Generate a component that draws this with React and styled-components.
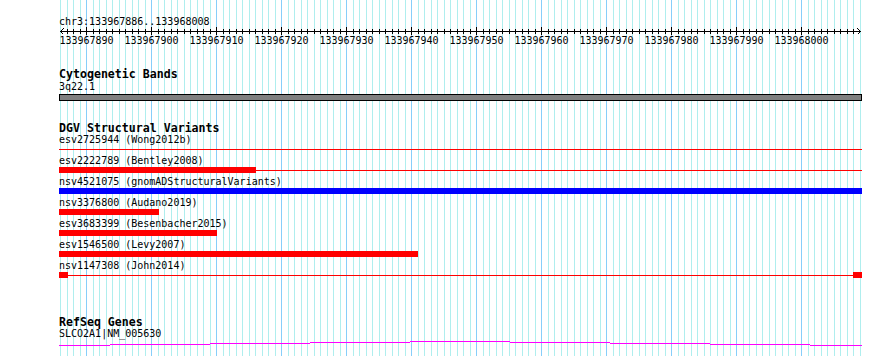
import React from 'react';
import styled, { createGlobalStyle } from 'styled-components';

const GlobalStyle = createGlobalStyle`
  html, body { margin: 0; padding: 0; background: #ffffff; }
  body { font-family: "DejaVu Sans Mono", "Liberation Mono", monospace; }
`;

const PX_PER_BP = 6.5;
const ORIGIN = 60;
const FEATURE_LEFT = 59;
const FEATURE_WIDTH = 803;
const MONO = '"DejaVu Sans Mono", "Liberation Mono", monospace';

const Panel = styled.div`
  position: relative;
  width: 890px;
  height: 356px;
  overflow: hidden;
  background: #ffffff;
`;

const GridLayer = styled.svg`
  position: absolute;
  left: 0;
  top: 0;
  z-index: 0;
`;

const Tracks = styled.div`
  position: relative;
  z-index: 1;
  display: flex;
  flex-direction: column;
  padding-top: 16px;
`;

const Section = styled.section`
  display: flex;
  flex-direction: column;
  margin-top: ${(p) => p.$gap || 0}px;
`;

const Label = styled.div`
  font-family: ${MONO};
  font-size: 10px;
  line-height: 12px;
  height: 12px;
  margin-top: ${(p) => p.$top || 0}px;
  color: #000;
  white-space: pre;
  padding-left: ${FEATURE_LEFT}px;
`;

const TrackTitle = styled.div`
  font-family: ${MONO};
  font-weight: bold;
  font-size: 11.6px;
  line-height: 12px;
  height: 12px;
  color: #000;
  white-space: pre;
  padding-left: ${FEATURE_LEFT}px;
`;

const RulerSvg = styled.svg`
  display: block;
  margin-top: -1px;
`;

const ScaleRow = styled.div`
  display: flex;
  margin-left: 54px;
  height: 12px;
`;

const ScaleLabel = styled.div`
  flex: 0 0 65px;
  width: 65px;
  text-align: center;
  font-family: ${MONO};
  font-size: 10px;
  line-height: 12px;
  color: #000;
`;

const BandBar = styled.div`
  box-sizing: border-box;
  margin-top: 1px;
  margin-left: ${FEATURE_LEFT}px;
  width: ${FEATURE_WIDTH}px;
  height: 7px;
  background: #808080;
  border: 1px solid #000;
`;

const FeatureRow = styled.div`
  display: flex;
  flex-direction: column;
  height: 21px;
`;

const Glyph = styled.div`
  display: flex;
  align-items: flex-start;
  margin-left: ${FEATURE_LEFT}px;
  width: ${FEATURE_WIDTH}px;
  height: 9px;
`;

const Bar = styled.div`
  flex: 0 0 auto;
  height: 6px;
  background: ${(p) => p.$color};
`;

const Connector = styled.div`
  flex: 1 1 auto;
  height: 1px;
  margin-top: 3px;
  background: ${(p) => p.$color};
`;

const GeneSvg = styled.svg`
  display: block;
  margin-left: ${FEATURE_LEFT}px;
`;

const gridX = (k) => Math.round(ORIGIN + PX_PER_BP * k);

function Grid() {
  const lines = [];
  for (let k = 0; k <= 123; k++) {
    const major = (k - 4) % 10 === 0;
    lines.push(
      <rect key={k} x={gridX(k)} y={0} width={1} height={356} fill={major ? '#87cefa' : '#afeeee'} />
    );
  }
  return (
    <GridLayer width={890} height={356} shapeRendering="crispEdges">
      {lines}
    </GridLayer>
  );
}

function Ruler() {
  const ticks = [];
  for (let k = 1; k <= 122; k++) {
    const major = (k - 4) % 10 === 0;
    ticks.push(
      <rect key={k} x={gridX(k)} y={major ? 0 : 2} width={1} height={major ? 8 : 5} fill="#000" />
    );
  }
  return (
    <RulerSvg width={890} height={8} shapeRendering="crispEdges">
      <rect x={60} y={4} width={801} height={1} fill="#000" />
      {ticks}
      <path d="M60.5 4.5 L63.5 1.5 M60.5 4.5 L63.5 7.5" stroke="#000" strokeWidth="1" fill="none" />
      <path d="M860.5 4.5 L857.5 1.5 M860.5 4.5 L857.5 7.5" stroke="#000" strokeWidth="1" fill="none" />
    </RulerSvg>
  );
}

const scaleLabels = Array.from({ length: 12 }, (_, i) => String(133967890 + i * 10));

const variants = [
  { label: 'esv2725944 (Wong2012b)', kind: 'line', color: '#ff0000' },
  { label: 'esv2222789 (Bentley2008)', kind: 'barTail', width: 197, color: '#ff0000' },
  { label: 'nsv4521075 (gnomADStructuralVariants)', kind: 'bar', width: FEATURE_WIDTH, color: '#0000ff' },
  { label: 'nsv3376800 (Audano2019)', kind: 'bar', width: 100, color: '#ff0000' },
  { label: 'esv3683399 (Besenbacher2015)', kind: 'bar', width: 158, color: '#ff0000' },
  { label: 'esv1546500 (Levy2007)', kind: 'bar', width: 359, color: '#ff0000' },
  { label: 'nsv1147308 (John2014)', kind: 'ends', color: '#ff0000' },
];

function VariantGlyph({ v }) {
  if (v.kind === 'line') {
    return (
      <Glyph>
        <Connector $color={v.color} />
      </Glyph>
    );
  }
  if (v.kind === 'barTail') {
    return (
      <Glyph>
        <Bar $color={v.color} style={{ width: v.width }} />
        <Connector $color={v.color} />
      </Glyph>
    );
  }
  if (v.kind === 'ends') {
    return (
      <Glyph>
        <Bar $color={v.color} style={{ width: 9 }} />
        <Connector $color={v.color} />
        <Bar $color={v.color} style={{ width: 9 }} />
      </Glyph>
    );
  }
  return (
    <Glyph>
      <Bar $color={v.color} style={{ width: v.width }} />
    </Glyph>
  );
}

const geneSegments = [
  [0, 51, 5],
  [51, 151, 4],
  [151, 251, 3],
  [251, 351, 2],
  [351, 451, 1],
  [451, 551, 2],
  [551, 651, 3],
  [651, 751, 4],
  [751, 803, 5],
];

function GeneGlyph() {
  return (
    <GeneSvg width={FEATURE_WIDTH} height={10} shapeRendering="crispEdges">
      {geneSegments.map(([a, b, y]) => (
        <rect key={a} x={a} y={y} width={b - a} height={1} fill="#ff00ff" />
      ))}
    </GeneSvg>
  );
}

export default function App() {
  return (
    <>
      <GlobalStyle />
      <Panel>
        <Grid />
        <Tracks>
          <Section>
            <Label>chr3:133967886..133968008</Label>
            <Ruler />
            <ScaleRow>
              {scaleLabels.map((s) => (
                <ScaleLabel key={s}>{s}</ScaleLabel>
              ))}
            </ScaleRow>
          </Section>

          <Section $gap={21}>
            <TrackTitle>Cytogenetic Bands</TrackTitle>
            <Label $top={1}>3q22.1</Label>
            <BandBar />
          </Section>

          <Section $gap={21}>
            <TrackTitle>DGV Structural Variants</TrackTitle>
            {variants.map((v) => (
              <FeatureRow key={v.label}>
                <Label>{v.label}</Label>
                <VariantGlyph v={v} />
              </FeatureRow>
            ))}
          </Section>

          <Section $gap={35}>
            <TrackTitle>RefSeq Genes</TrackTitle>
            <Label>SLCO2A1|NM_005630</Label>
            <GeneGlyph />
          </Section>
        </Tracks>
      </Panel>
    </>
  );
}
